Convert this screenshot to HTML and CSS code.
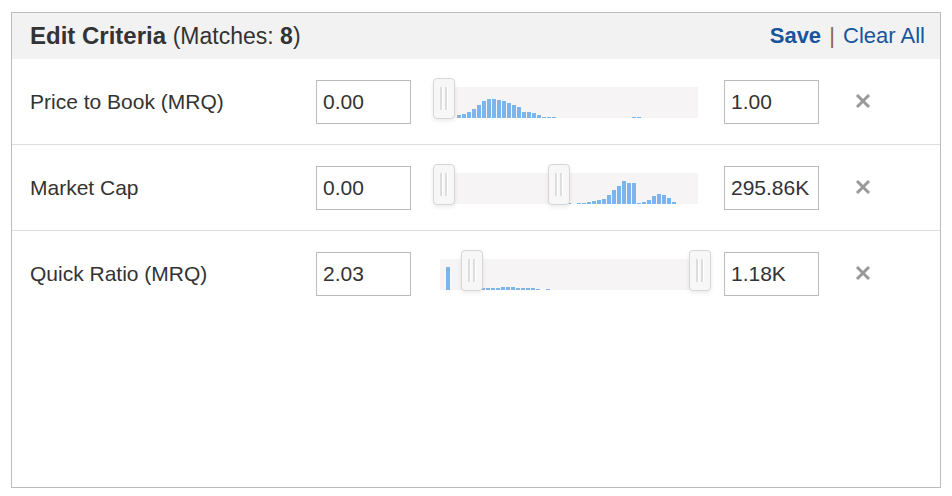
FILE: index.html
```html
<!DOCTYPE html>
<html lang="en">
<head>
  <meta charset="UTF-8">
  <title>Edit Criteria</title>
  <link rel="stylesheet" href="styles.css">
</head>
<body>

  <div class="panel">
    <div class="panel-head">
      <h2><b>Edit Criteria</b> <span class="matches">(Matches: <b>8</b>)</span></h2>
      <div class="actions">
        <a href="#" class="save">Save</a> <span class="sep">|</span> <a href="#">Clear All</a>
      </div>
    </div>

    <div class="row">
      <div class="name">Price to Book (MRQ)</div>
      <input type="text" value="0.00">
      <div class="slider" data-hist="r1">
        <div class="track"><div class="hist"></div></div>
        <span class="handle" style="left:-7px"></span>
      </div>
      <input type="text" value="1.00">
      <button class="remove" type="button"><svg width="16" height="16" viewBox="0 0 16 16"><path d="M2 2L14 14M14 2L2 14"/></svg></button>
    </div>

    <div class="row">
      <div class="name">Market Cap</div>
      <input type="text" value="0.00">
      <div class="slider" data-hist="r2">
        <div class="track"><div class="hist"></div></div>
        <span class="handle" style="left:-7px"></span>
        <span class="handle" style="left:108px"></span>
      </div>
      <input type="text" value="295.86K">
      <button class="remove" type="button"><svg width="16" height="16" viewBox="0 0 16 16"><path d="M2 2L14 14M14 2L2 14"/></svg></button>
    </div>

    <div class="row last">
      <div class="name">Quick Ratio (MRQ)</div>
      <input type="text" value="2.03">
      <div class="slider" data-hist="r3">
        <div class="track"><div class="hist"></div></div>
        <span class="handle" style="left:21px"></span>
        <span class="handle" style="left:249px"></span>
      </div>
      <input type="text" value="1.18K">
      <button class="remove" type="button"><svg width="16" height="16" viewBox="0 0 16 16"><path d="M2 2L14 14M14 2L2 14"/></svg></button>
    </div>
  </div>

  <script>
    // histogram data: offset (px from track start) + bar heights
    const hists = {
      r1: { start: 17, bars: [3,4,6,9,13,17,19,19,18,17,15,13,11,6,6,5,3,1,1,1,0,0,0,0,0,0,0,0,0,0,0,0,0,0,0,1,1] },
      r2: { start: 127, bars: [1,0,1,1,2,3,4,5,9,14,18,23,21,21,1,2,4,8,10,9,6,2] },
      r3: { start: 6, bars: [23,0,0,0,0,0,0,2,2,2,2,3,3,3,2,2,2,2,1,0,1] }
    };
    document.querySelectorAll('.slider').forEach(function(s) {
      const h = hists[s.dataset.hist];
      const box = s.querySelector('.hist');
      box.style.marginLeft = h.start + 'px';
      h.bars.forEach(function(v) {
        const bar = document.createElement('i');
        bar.style.height = v + 'px';
        box.appendChild(bar);
      });
    });
  </script>
</body>
</html>
```

FILE: styles.css
```css
body {
  margin: 0;
  font-family: 'Liberation Sans', Arial, sans-serif;
  color: #333;
  background: #fff;
}

.panel {
  margin: 12px 0 0 11px;
  width: 928px;
  height: 474px;
  border: 1px solid #bbb;
}

.panel-head {
  display: flex;
  justify-content: space-between;
  align-items: center;
  height: 46px;
  padding: 0 15px 0 18px;
  background: #f2f2f2;
}

.panel-head h2 {
  margin: 0;
  font-size: 24px;
  font-weight: normal;
  color: #333;
}

.matches {
  font-size: 23px;
}

.actions {
  font-size: 22px;
  word-spacing: 2px;
}

.actions a {
  color: #17569b;
  text-decoration: none;
  word-spacing: 0;
}

.actions .save {
  font-weight: bold;
}

.sep {
  color: #8a6d3b;
}

.row {
  display: flex;
  align-items: center;
  height: 85px;
  padding-left: 18px;
  border-bottom: 1px solid #ddd;
}

.row.last {
  border-bottom: none;
}

.name {
  width: 286px;
  font-size: 21px;
}

input {
  box-sizing: border-box;
  width: 95px;
  height: 44px;
  padding: 0 6px;
  border: 1px solid #bbb;
  font-family: inherit;
  font-size: 21px;
  color: #333;
}

.slider {
  position: relative;
  width: 258px;
  height: 44px;
  margin: 0 26px 0 29px;
}

.track {
  position: absolute;
  top: 7px;
  left: 0;
  right: 0;
  height: 31px;
  background: #f6f4f4;
  display: flex;
  align-items: flex-end;
}

.hist {
  display: flex;
  align-items: flex-end;
}

.hist i {
  display: block;
  width: 4px;
  margin-right: 1px;
  background: #7cb5ec;
}

.handle {
  position: absolute;
  top: -2px;
  box-sizing: border-box;
  width: 22px;
  height: 41px;
  border: 1px solid #d6d6d6;
  border-radius: 4px;
  background: #f7f7f7;
  box-shadow: 0 2px 4px rgba(0,0,0,0.08);
}

.handle::before,
.handle::after {
  content: '';
  position: absolute;
  top: 8px;
  bottom: 8px;
  width: 2px;
  background: #ddd;
  border-right: 1px solid #fff;
}

.handle::before { left: 6px; }
.handle::after { left: 11px; }

.remove {
  margin-left: 35px;
  padding: 0;
  border: none;
  background: none;
  width: 18px;
  height: 18px;
  cursor: pointer;
}

.remove path {
  stroke: #999;
  stroke-width: 3;
  fill: none;
}
```
